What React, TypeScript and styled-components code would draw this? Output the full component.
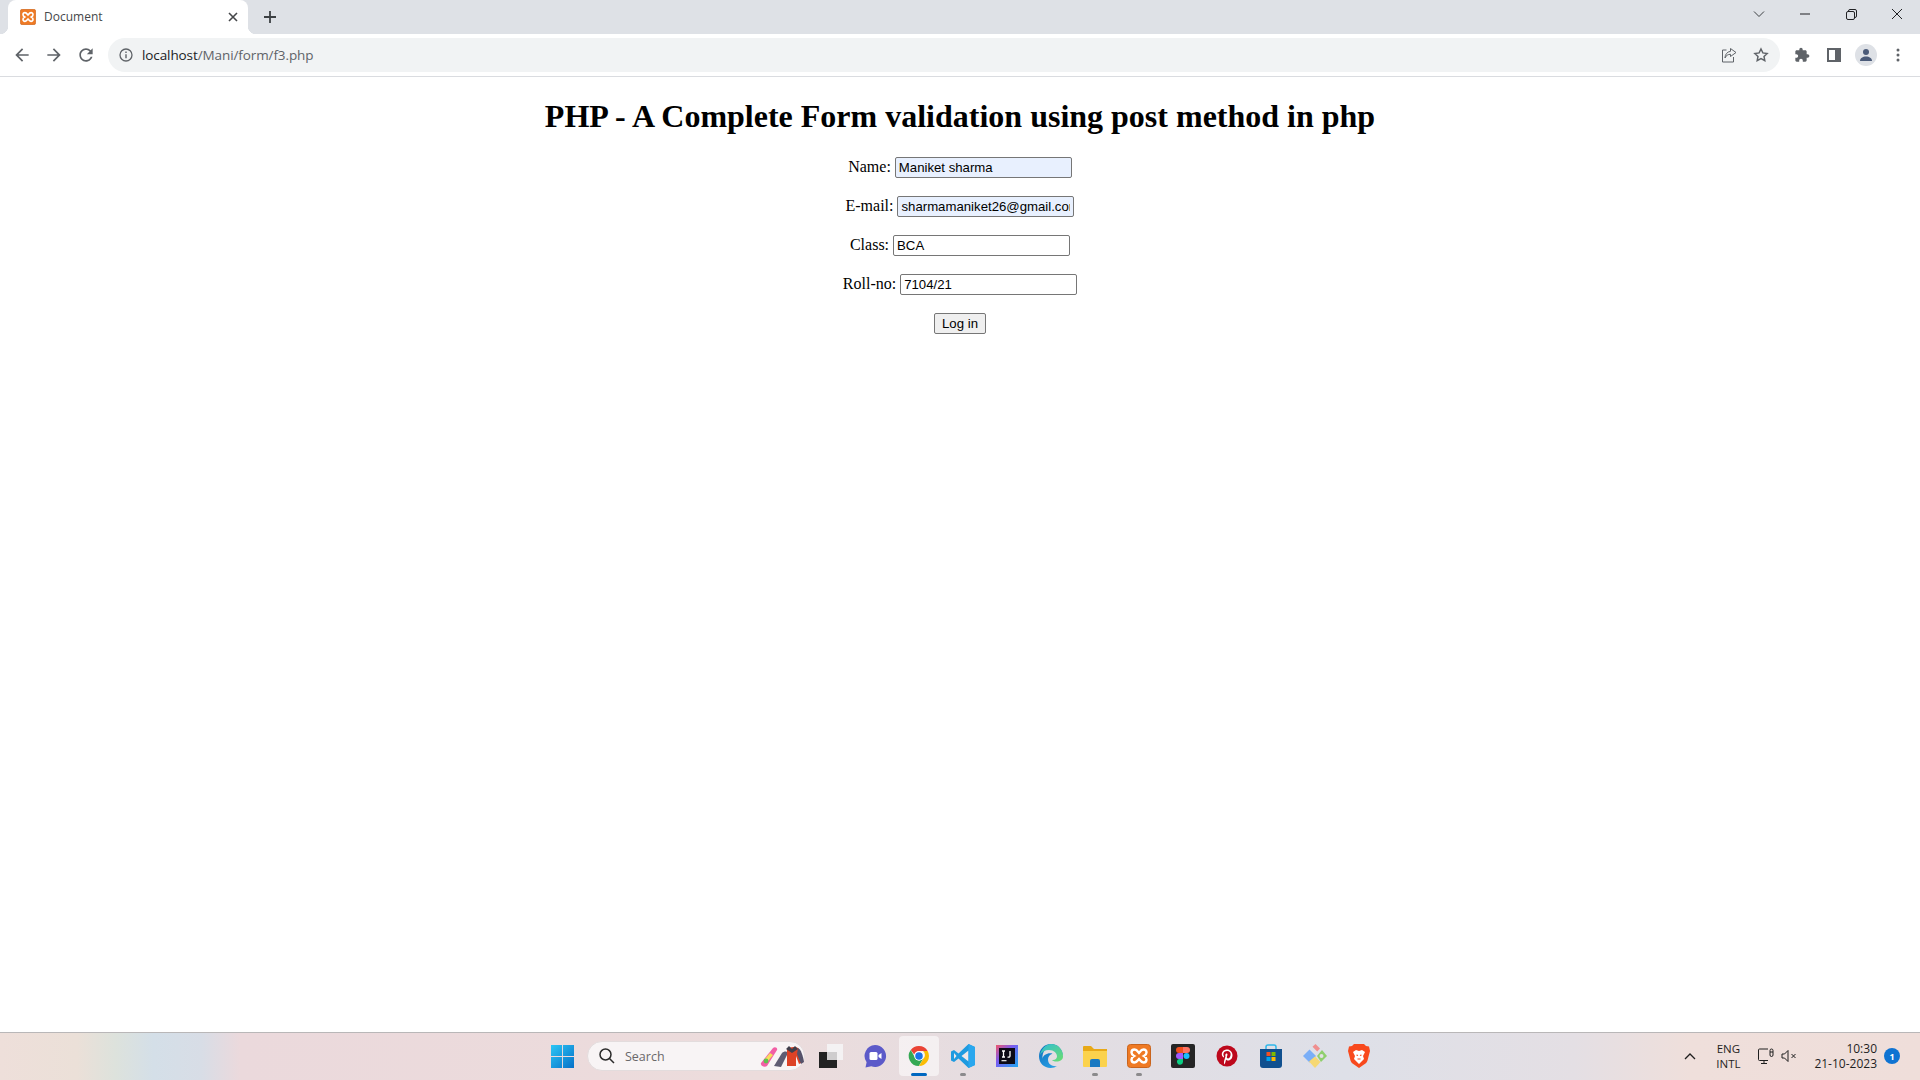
import styled, { createGlobalStyle } from 'styled-components';

const GlobalStyle = createGlobalStyle`
  html, body {
    margin: 0;
    padding: 0;
    height: 100%;
    overflow: hidden;
    background: #ffffff;
  }
`;

const Screen = styled.div`
  display: flex;
  flex-direction: column;
  width: 1920px;
  height: 1080px;
  overflow: hidden;
  font-family: 'Open Sans', 'Liberation Sans', sans-serif;
`;

/* browser chrome */
const TabStrip = styled.div`
  display: flex;
  align-items: flex-end;
  height: 34px;
  padding-left: 8px;
  background: #dee1e6;
`;

const Tab = styled.div`
  position: relative;
  display: flex;
  align-items: center;
  width: 240px;
  height: 34px;
  padding: 0 12px 1px;
  box-sizing: border-box;
  gap: 8px;
  background: #ffffff;
  border-radius: 8px 8px 0 0;

  &::before,
  &::after {
    content: '';
    position: absolute;
    bottom: 0;
    width: 8px;
    height: 8px;
  }

  &::before {
    left: -8px;
    background: radial-gradient(circle at 0 0, #dee1e6 8px, #ffffff 8.5px);
  }

  &::after {
    right: -8px;
    background: radial-gradient(circle at 100% 0, #dee1e6 8px, #ffffff 8.5px);
  }
`;

const TabTitle = styled.span`
  flex: 1;
  font-size: 12px;
  color: #45474a;
`;

const TabClose = styled.svg`
  width: 16px;
  height: 16px;
  margin-right: -5px;
`;

const NewTab = styled.svg`
  width: 16px;
  height: 16px;
  margin: 0 0 9px 14px;
`;

const WindowControls = styled.div`
  display: flex;
  align-items: center;
  height: 28px;
  margin-left: auto;
  align-self: flex-start;
`;

const WindowButton = styled.div<{ $width: number }>`
  display: flex;
  align-items: center;
  justify-content: center;
  width: ${(p) => p.$width}px;
  height: 28px;
`;

const Toolbar = styled.div`
  display: flex;
  align-items: center;
  height: 42px;
  padding-left: 6px;
  background: #ffffff;
  border-bottom: 1px solid #dadce0;
`;

const NavButton = styled.div`
  display: flex;
  align-items: center;
  justify-content: center;
  width: 32px;
  height: 32px;
`;

const Omnibox = styled.div`
  display: flex;
  align-items: center;
  width: 1672px;
  height: 34px;
  margin-left: 6px;
  padding: 0 3px 0 11px;
  box-sizing: border-box;
  background: #f1f3f4;
  border-radius: 17px;
`;

const Url = styled.span`
  flex: 1;
  margin-left: 9px;
  font-size: 13.5px;
  letter-spacing: -0.1px;
  color: #5f6368;

  b {
    font-weight: 400;
    color: #202124;
  }
`;

const OmniIcon = styled.div`
  display: flex;
  align-items: center;
  justify-content: center;
  width: 32px;
  height: 32px;
`;

const ToolbarIcons = styled.div`
  display: flex;
  align-items: center;
  margin-left: 6px;
`;

const Avatar = styled.div`
  display: flex;
  align-items: center;
  justify-content: center;
  width: 22px;
  height: 22px;
  border-radius: 50%;
  background: #dee1e6;
`;

/* page */
const Page = styled.main`
  flex: 1;
  padding: 0 8px;
  text-align: center;
  font-family: 'Liberation Serif', 'Times New Roman', serif;
  font-size: 16px;
  color: #000000;
`;

const Heading = styled.h1`
  margin: 21.44px 0 20.44px;
  font-size: 32px;
  font-weight: 700;
`;

const Form = styled.form`
  display: block;
`;

const Row = styled.p`
  margin: 0 0 16px;
  height: 23px;
  line-height: 21px;
`;

const Field = styled.input<{ $filled?: boolean }>`
  width: 177px;
  height: 21px;
  padding: 1px 3px;
  box-sizing: border-box;
  border: 1px solid #767676;
  border-radius: 2px;
  background: ${(p) => (p.$filled ? '#e8f0fe' : '#ffffff')};
  font-family: 'Liberation Sans', Arial, sans-serif;
  font-size: 13.2px;
  color: #000000;
  outline: none;
`;

const Submit = styled.button`
  width: 52px;
  height: 21px;
  padding: 1px 6px;
  box-sizing: border-box;
  border: 1px solid #767676;
  border-radius: 2px;
  background: #efefef;
  font-family: 'Liberation Sans', Arial, sans-serif;
  font-size: 13.2px;
  color: #000000;
`;

/* taskbar */
const Taskbar = styled.footer`
  display: grid;
  grid-template-columns: 1fr auto 1fr;
  align-items: center;
  height: 48px;
  padding-bottom: 1px;
  box-sizing: border-box;
  border-top: 1px solid #b9b7b8;
  background: linear-gradient(
    90deg,
    #eedfda 0%,
    #ebe0d8 4%,
    #dde2dc 6%,
    #d4dfe8 8%,
    #d8dde6 10.5%,
    #ebd9dc 12.5%,
    #ecdcdc 40%,
    #e3dde2 55%,
    #dee0e8 70%,
    #e4dfe4 82%,
    #efdfdb 88%,
    #efdeda 100%
  );
`;

const TaskbarApps = styled.div`
  grid-column: 2;
  display: flex;
  align-items: center;
  gap: 4px;
`;

const AppSlot = styled.div<{ $active?: boolean }>`
  position: relative;
  display: flex;
  align-items: center;
  justify-content: center;
  width: 40px;
  height: 40px;
  border-radius: 4px;
  background: ${(p) => (p.$active ? 'rgba(255,255,255,0.55)' : 'transparent')};
`;

const RunDot = styled.span<{ $active?: boolean }>`
  position: absolute;
  bottom: 0;
  left: 50%;
  width: ${(p) => (p.$active ? 16 : 6)}px;
  height: 3px;
  margin-left: ${(p) => (p.$active ? -8 : -3)}px;
  border-radius: 2px;
  background: ${(p) => (p.$active ? '#0067c0' : '#8b8a8c')};
`;

const WinLogo = styled.svg`
  width: 23px;
  height: 23px;
  margin-left: 2px;
`;

const SearchPill = styled.div`
  display: flex;
  align-items: center;
  width: 218px;
  height: 30px;
  margin: 0 2px;
  padding-left: 10px;
  box-sizing: border-box;
  border-radius: 15px;
  background: #f8f4f5;
  border: 1px solid #e3dcdd;
`;

const SearchLabel = styled.span`
  flex: 1;
  margin-left: 9px;
  font-size: 12.5px;
  color: #6a686a;
`;

const Tray = styled.div`
  grid-column: 3;
  justify-self: end;
  display: flex;
  align-items: center;
  padding-right: 20px;
  color: #1f1f1f;
`;

const TrayIcon = styled.svg<{ $left: number }>`
  margin-left: ${(p) => p.$left}px;
  fill: none;
  stroke: #1f1f1f;
  stroke-width: 1;
`;

const Lang = styled.div`
  width: 40px;
  margin-left: 11px;
  text-align: center;
  font-size: 11.5px;
  line-height: 15.5px;
`;

const Clock = styled.div`
  margin-left: 17px;
  text-align: right;
  font-size: 12px;
  line-height: 15.5px;
`;

const Badge = styled.span`
  display: flex;
  align-items: center;
  justify-content: center;
  width: 16px;
  height: 16px;
  margin-left: 7px;
  border-radius: 50%;
  background: #0f73d2;
  color: #ffffff;
  font-size: 9px;
  font-weight: 700;
`;

function XamppIcon({ size }: { size: number }) {
  return (
    <svg width={size} height={size} viewBox="0 0 24 24">
      <rect x="0.5" y="0.5" width="23" height="23" rx="3" fill="#ef7a24" stroke="#c9641d" />
      <path
        d="M7.5 5.5c-2 0-3 1.4-3 3 0 1.5 1 2.6 2.6 3.5-1.6.9-2.6 2-2.6 3.5 0 1.6 1 3 3 3 2 0 3-1.5 4.5-3.4 1.5 1.9 2.5 3.4 4.500 3.4 2 0 3-1.4 3-3 0-1.500-1-2.600-2.600-3.500 1.600-.9 2.600-2 2.600-3.500 0-1.600-1-3-3-3-2 0-3 1.500-4.500 3.400C10.500 7 9.500 5.500 7.500 5.500z"
        fill="none"
        stroke="#ffffff"
        strokeWidth="2.4"
      />
    </svg>
  );
}

const IconFill = '#5f6368';

export default function App() {
  return (
    <Screen>
      <GlobalStyle />
      <TabStrip>
        <Tab>
          <XamppIcon size={16} />
          <TabTitle>Document</TabTitle>
          <TabClose viewBox="0 0 16 16">
            <path d="M4 4l8 8M12 4l-8 8" stroke="#45474a" strokeWidth="1.6" />
          </TabClose>
        </Tab>
        <NewTab viewBox="0 0 16 16">
          <path d="M8 2v12M2 8h12" stroke="#3c4043" strokeWidth="1.8" />
        </NewTab>
        <WindowControls>
          <WindowButton $width={46}>
            <svg width="12" height="8" viewBox="0 0 12 8">
              <path d="M1 1.500l5 5 5-5" fill="none" stroke="#3c4043" strokeWidth="1" />
            </svg>
          </WindowButton>
          <WindowButton $width={46}>
            <svg width="10" height="2" viewBox="0 0 10 2">
              <path d="M0 1h10" stroke="#202124" strokeWidth="1" />
            </svg>
          </WindowButton>
          <WindowButton $width={46}>
            <svg width="11" height="11" viewBox="0 0 11 11">
              <rect x="0.500" y="2.500" width="8" height="8" rx="1.500" fill="none" stroke="#202124" />
              <path d="M2.500 2.500v-.5a1.500 1.500 0 0 1 1.500-1.500h5a1.500 1.500 0 0 1 1.500 1.500v5a1.500 1.500 0 0 1-1.500 1.500h-.5" fill="none" stroke="#202124" />
            </svg>
          </WindowButton>
          <WindowButton $width={46}>
            <svg width="12" height="12" viewBox="0 0 12 12">
              <path d="M1 1l10 10M11 1L1 11" stroke="#202124" strokeWidth="1" />
            </svg>
          </WindowButton>
        </WindowControls>
      </TabStrip>

      <Toolbar>
        <NavButton>
          <svg width="20" height="20" viewBox="0 0 24 24" fill={IconFill}>
            <path d="M20 11H7.830l5.590-5.590L12 4l-8 8 8 8 1.410-1.410L7.830 13H20v-2z" />
          </svg>
        </NavButton>
        <NavButton>
          <svg width="20" height="20" viewBox="0 0 24 24" fill={IconFill}>
            <path d="M12 4l-1.410 1.410L16.170 11H4v2h12.170l-5.580 5.590L12 20l8-8z" />
          </svg>
        </NavButton>
        <NavButton>
          <svg width="20" height="20" viewBox="0 0 24 24" fill={IconFill}>
            <path d="M17.650 6.350C16.200 4.900 14.210 4 12 4c-4.420 0-7.990 3.580-7.990 8s3.570 8 7.990 8c3.730 0 6.840-2.550 7.730-6h-2.080c-.82 2.330-3.040 4-5.650 4-3.310 0-6-2.690-6-6s2.690-6 6-6c1.660 0 3.140.69 4.220 1.780L13 11h7V4l-2.350 2.350z" />
          </svg>
        </NavButton>
        <Omnibox>
          <svg width="14" height="14" viewBox="0 0 14 14">
            <circle cx="7" cy="7" r="6" fill="none" stroke="#5f6368" strokeWidth="1.300" />
            <path d="M7 6.200v4M7 3.600v1.500" stroke="#5f6368" strokeWidth="1.400" />
          </svg>
          <Url>
            <b>localhost</b>/Mani/form/f3.php
          </Url>
          <OmniIcon>
            <svg width="16" height="16" viewBox="0 0 16 16" fill="none" stroke="#5f6368" strokeWidth="1">
              <path d="M5.500 3H1.500v12h11V10" />
              <path d="M9.500 1.500l5.500 4-5.500 4V7.300C7 7.300 5 8.500 4 11c0-3.500 2-6.200 5.500-6.700z" />
            </svg>
          </OmniIcon>
          <OmniIcon>
            <svg width="16" height="16" viewBox="0 0 24 24" fill="none" stroke="#5f6368" strokeWidth="2.200">
              <path d="M12 3l2.800 5.900 6.400.8-4.700 4.400 1.200 6.400L12 17.400l-5.700 3.100 1.200-6.400-4.700-4.400 6.400-.8z" />
            </svg>
          </OmniIcon>
        </Omnibox>
        <ToolbarIcons>
          <NavButton>
            <svg width="16" height="16" viewBox="0 0 24 24" fill={IconFill}>
              <path d="M20.500 11H19V7c0-1.100-.9-2-2-2h-4V3.500C13 2.120 11.880 1 10.500 1S8 2.120 8 3.500V5H4c-1.100 0-1.990.9-1.990 2v3.800H3.500c1.490 0 2.700 1.210 2.700 2.700s-1.210 2.700-2.700 2.700H2V20c0 1.100.9 2 2 2h3.800v-1.500c0-1.490 1.210-2.700 2.700-2.700 1.490 0 2.700 1.210 2.700 2.700V22H17c1.100 0 2-.9 2-2v-4h1.500c1.380 0 2.500-1.120 2.500-2.500S21.880 11 20.500 11z" />
            </svg>
          </NavButton>
          <NavButton>
            <svg width="14" height="14" viewBox="0 0 14 14">
              <rect x="1" y="1" width="12" height="12" fill="none" stroke={IconFill} strokeWidth="2" />
              <rect x="8" y="1" width="5" height="12" fill={IconFill} />
            </svg>
          </NavButton>
          <NavButton>
            <Avatar>
              <svg width="14" height="14" viewBox="0 0 14 14" fill="#4a5a78">
                <circle cx="7" cy="4" r="3" />
                <path d="M1 13c0-3 2.800-4.500 6-4.500s6 1.500 6 4.500z" />
              </svg>
            </Avatar>
          </NavButton>
          <NavButton>
            <svg width="4" height="14" viewBox="0 0 4 14" fill={IconFill}>
              <circle cx="2" cy="2" r="1.500" />
              <circle cx="2" cy="7" r="1.500" />
              <circle cx="2" cy="12" r="1.500" />
            </svg>
          </NavButton>
        </ToolbarIcons>
      </Toolbar>

      <Page>
        <Heading>PHP - A Complete Form validation using post method in php</Heading>
        <Form>
          <Row>
            Name: <Field $filled defaultValue="Maniket sharma" />
          </Row>
          <Row>
            E-mail: <Field $filled defaultValue="sharmamaniket26@gmail.com" />
          </Row>
          <Row>
            Class: <Field defaultValue="BCA" />
          </Row>
          <Row>
            Roll-no: <Field defaultValue="7104/21" />
          </Row>
          <Row>
            <Submit type="button">Log in</Submit>
          </Row>
        </Form>
      </Page>

      <Taskbar>
        <TaskbarApps>
          <AppSlot>
            <WinLogo viewBox="0 0 24 24">
              <defs>
                <linearGradient id="winLogo" x1="0" y1="0" x2="1" y2="1">
                  <stop offset="0" stopColor="#2cc6f5" />
                  <stop offset="1" stopColor="#0670c8" />
                </linearGradient>
              </defs>
              <path fill="url(#winLogo)" d="M0 0h11.500v11.500H0zM12.500 0H24v11.500H12.500zM0 12.500h11.500V24H0zM12.500 12.500H24V24H12.500z" />
            </WinLogo>
          </AppSlot>
          <SearchPill>
            <svg width="18" height="18" viewBox="0 0 18 18" fill="none" stroke="#2b2b2b" strokeWidth="1.500">
              <circle cx="7.500" cy="7.500" r="5.500" />
              <path d="M11.500 11.500L16 16" />
            </svg>
            <SearchLabel>Search</SearchLabel>
            <svg width="44" height="26" viewBox="0 0 44 26">
              <path d="M1 20L13 5c2-2 5 0 4 2L7 23c-2 2-7 0-6-3z" fill="#f25fa5" />
              <path d="M5 16l5-6 3 2-5 6z" fill="#f6e05a" />
              <circle cx="6" cy="18" r="2.400" fill="#5ec24f" />
              <path d="M14 23l8-13c2-2 5-2 6 0l-7 14z" fill="#5f5c72" />
              <path d="M27 6c2-2 8-3 11-1 2 2 4 8 5 14l-4 2-3-8v10h-9V10z" fill="#dd4226" />
              <path d="M29 3l3 3 3-3 3 3-6 4-6-4z" fill="#3f3f4c" />
              <path d="M38 5c3 1 5 8 6 14l-3 2-4-10z" fill="#55526a" />
            </svg>
          </SearchPill>
          <AppSlot>
            <svg width="24" height="24" viewBox="0 0 24 24">
              <rect x="8" y="0" width="16" height="16" fill="#f4f2f3" />
              <rect x="0" y="8" width="18" height="16" fill="#222222" />
              <rect x="8" y="8" width="10" height="8" fill="#cfcdce" />
            </svg>
          </AppSlot>
          <AppSlot>
            <svg width="24" height="24" viewBox="0 0 24 24">
              <path d="M12 1a11 11 0 1 1-3.800 21.300L2.500 23.500l1.100-5.200A11 11 0 0 1 12 1z" fill="#5c5ac9" />
              <rect x="6.500" y="8" width="8" height="8" rx="1.500" fill="#ffffff" />
              <path d="M15.500 11l3-2v6l-3-2z" fill="#ffffff" />
            </svg>
          </AppSlot>
          <AppSlot $active>
            <svg width="24" height="24" viewBox="0 0 48 48">
              <path d="M24 4a20 20 0 0 1 17.300 10H24a10 10 0 0 0-9.500 7L7.500 12A20 20 0 0 1 24 4z" fill="#ea4335" />
              <path d="M41.300 14A20 20 0 0 1 24 44l9-15a10 10 0 0 0-1-15z" fill="#fbbc04" />
              <path d="M7.500 12l9 16a10 10 0 0 0 16 1l-9 15A20 20 0 0 1 7.500 12z" fill="#34a853" />
              <circle cx="24" cy="24" r="9.500" fill="#ffffff" />
              <circle cx="24" cy="24" r="7.500" fill="#1a73e8" />
            </svg>
            <RunDot $active />
          </AppSlot>
          <AppSlot>
            <svg width="24" height="24" viewBox="0 0 24 24">
              <path d="M17.500 0L24 3v18l-6.500 3-10-9.500-4.500 3.500L0 16.500V7.500L3 6l4.500 3.500z" fill="#1f9be0" />
              <path d="M17.500 6.500L10.500 12l7 5.500z" fill="#f1e8e8" />
              <path d="M17.500 0L24 3v18l-6.500 3z" fill="#2aa7ee" />
              <path d="M3 9l2.500 3L3 15z" fill="#f1e8e8" />
            </svg>
            <RunDot />
          </AppSlot>
          <AppSlot>
            <svg width="22" height="22" viewBox="0 0 22 22">
              <defs>
                <linearGradient id="ijEdge" x1="0" y1="0" x2="1" y2="1">
                  <stop offset="0" stopColor="#f0566a" />
                  <stop offset="0.4" stopColor="#7a5cf0" />
                  <stop offset="1" stopColor="#1ea7f2" />
                </linearGradient>
              </defs>
              <rect width="22" height="22" fill="url(#ijEdge)" />
              <rect x="3" y="3" width="16" height="16" fill="#0c0a16" />
              <path d="M6 6h3M7.500 6v6M6 12h3M14 6v5c0 1-1 1.500-2.500 1" fill="none" stroke="#ffffff" strokeWidth="1.300" />
              <rect x="5.500" y="15" width="5" height="1.300" fill="#d8d8d8" />
            </svg>
          </AppSlot>
          <AppSlot>
            <svg width="24" height="24" viewBox="0 0 24 24">
              <defs>
                <linearGradient id="edgeBlue" x1="0" y1="0" x2="0.700" y2="1">
                  <stop offset="0" stopColor="#0c6bb8" />
                  <stop offset="1" stopColor="#2aa2e8" />
                </linearGradient>
                <linearGradient id="edgeGreen" x1="0" y1="0" x2="1" y2="1">
                  <stop offset="0" stopColor="#2fbdd6" />
                  <stop offset="1" stopColor="#6bdd6e" />
                </linearGradient>
              </defs>
              <path d="M12 0C5 0 0 5.500 0 12.500 0 19 5 24 11.500 24c2.500 0 5-.7 6.800-2-4 .9-9.300-1-9.300-6.500 0-3 2-5 4.500-5.800-4-1.500-9.500 1-10 5C3 8 7 3 12 3c5 0 9 2 10 6 1 .5 2 3 2 3.500C24 5.500 19 0 12 0z" fill="url(#edgeBlue)" />
              <path d="M12 0c7 0 12 5.500 12 12.500 0 3.500-3 5-6.500 5-2.500 0-4-.7-4.500-1.500 3 .5 5-1.500 5-3.500 0-3.500-3-6.500-8-6.500-4 0-7.500 2-9 5C2.500 5 6.500 0 12 0z" fill="url(#edgeGreen)" />
            </svg>
          </AppSlot>
          <AppSlot>
            <svg width="24" height="24" viewBox="0 0 24 24">
              <path d="M0 3a1 1 0 0 1 1-1h7l3 3h13v6H0z" fill="#e8a917" />
              <path d="M0 7h24v15a1 1 0 0 1-1 1H1a1 1 0 0 1-1-1z" fill="#fbd24d" />
              <path d="M7 17a2 2 0 0 1 2-2h6a2 2 0 0 1 2 2v6H7z" fill="#1878c2" />
            </svg>
            <RunDot />
          </AppSlot>
          <AppSlot>
            <XamppIcon size={24} />
            <RunDot />
          </AppSlot>
          <AppSlot>
            <svg width="24" height="24" viewBox="0 0 24 24">
              <rect width="24" height="24" rx="2" fill="#252525" />
              <path d="M8 3h4v6H8a3 3 0 0 1 0-6z" fill="#f24e1e" />
              <path d="M12 3h4a3 3 0 0 1 0 6h-4z" fill="#ff7262" />
              <path d="M8 9h4v6H8a3 3 0 0 1 0-6z" fill="#a259ff" />
              <circle cx="15.500" cy="12" r="3" fill="#1abcfe" />
              <path d="M8 15h4v3a3 3 0 1 1-4-3z" fill="#0acf83" />
            </svg>
          </AppSlot>
          <AppSlot>
            <svg width="22" height="22" viewBox="0 0 22 22">
              <circle cx="11" cy="11" r="10.500" fill="#bd081c" />
              <path d="M11.300 4.500c-3.600 0-5.500 2.300-5.500 4.800 0 1.200.7 2.700 1.700 3.100.3.100.3-.1.500-.8 0-.2 0-.3-.1-.5-1.300-1.800-.2-5 3.200-5 2.600 0 3.800 1.700 3.500 3.900-.3 2-1.300 3.400-2.600 3.400-.8 0-1.300-.7-1.200-1.400.2-.9.700-1.900.7-2.600 0-1.500-2.200-1.300-2.200.8 0 .6.200 1.100.2 1.100L8.100 16c-.2 1-.1 2.500 0 3.500.5-.4 1.100-1.600 1.400-2.800l.6-2.200c.3.600 1.200 1 2 1 2.700 0 4.400-2.500 4.400-5.300 0-3-2.600-5.700-5.200-5.700z" fill="#ffffff" />
            </svg>
          </AppSlot>
          <AppSlot>
            <svg width="24" height="24" viewBox="0 0 24 24">
              <path d="M7 6V3a2 2 0 0 1 2-2h6a2 2 0 0 1 2 2v3" fill="none" stroke="#30b8ea" strokeWidth="1.500" />
              <path d="M1 5h22v16a3 3 0 0 1-3 3H4a3 3 0 0 1-3-3z" fill="#10508f" />
              <rect x="7.500" y="8" width="4" height="4" fill="#f25022" />
              <rect x="12.500" y="8" width="4" height="4" fill="#7fba00" />
              <rect x="7.500" y="13" width="4" height="4" fill="#00a4ef" />
              <rect x="12.500" y="13" width="4" height="4" fill="#ffb900" />
            </svg>
          </AppSlot>
          <AppSlot>
            <svg width="24" height="24" viewBox="0 0 24 24">
              <path d="M0 12l6.500-6.500L13 12l-6.500 6.500z" fill="#7aaef7" />
              <path d="M6 17.500l6-5 5.500 5.500-5.500 6z" fill="#f6d873" />
              <path d="M14 12l5-6 5 6-6 6z" fill="#8fcf6d" />
              <path d="M9.500 2.800l3-2.800 4.500 4.500-2.800 3z" fill="#f08f8f" />
              <circle cx="18.500" cy="12" r="2" fill="#e4e0e4" />
            </svg>
          </AppSlot>
          <AppSlot>
            <svg width="22" height="24" viewBox="0 0 22 24">
              <path d="M6 0h10l2 2 3 .5L22 7l-2.500 9.500c-.5 2-2 3-3.500 4L11 24l-5-3.500c-1.500-1-3-2-3.500-4L0 7l1-4.500L4 2z" fill="#f8491d" />
              <path d="M8 6l3 1 3-1 3 2-2 4 1 3-5 5-5-5 1-3-2-4z" fill="#ffffff" />
              <path d="M8.500 11l1.500.5M13.500 11l-1.500.5M9.500 15h3" stroke="#f8491d" strokeWidth="1.200" />
            </svg>
          </AppSlot>
        </TaskbarApps>
        <Tray>
          <svg width="14" height="8" viewBox="0 0 14 8">
            <path d="M2 7l5-5 5 5" fill="none" stroke="#1f1f1f" strokeWidth="1.300" />
          </svg>
          <Lang>
            ENG
            <br />
            INTL
          </Lang>
          <TrayIcon $left={10} width="16" height="17" viewBox="0 0 16 17">
            <path d="M10 12.500H1.500a1 1 0 0 1-1-1V2a1 1 0 0 1 1-1H10M6 12.500v3M3 15.500h6" />
            <rect x="12" y="1" width="3" height="7.500" rx="1.500" />
            <path d="M12 4h3" />
          </TrayIcon>
          <TrayIcon $left={7} width="16" height="14" viewBox="0 0 16 14">
            <path d="M1 5h2.500L7 1.500v11L3.500 9H1zM10.500 5l4 4M14.500 5l-4 4" />
          </TrayIcon>
          <Clock>
            10:30
            <br />
            21-10-2023
          </Clock>
          <Badge>1</Badge>
        </Tray>
      </Taskbar>
    </Screen>
  );
}
